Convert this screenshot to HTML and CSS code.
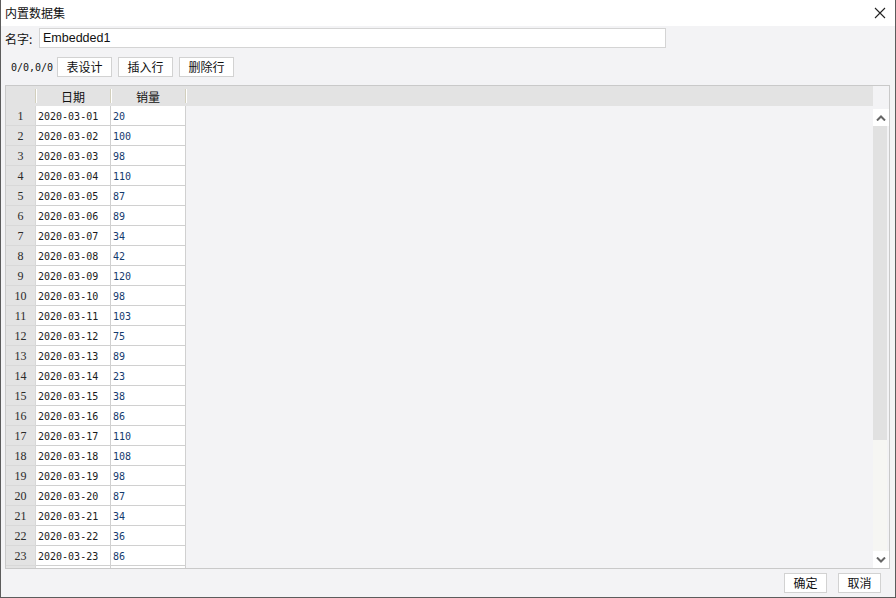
FILE: index.html
```html
<!DOCTYPE html>
<html lang="zh-CN">
<head>
    <meta charset="UTF-8">
    <title>内置数据集</title>
    <link rel="stylesheet" href="styles.css">
</head>
<body>
    <div class="window">
        <div class="titlebar">
            <span class="title">内置数据集</span>
            <svg class="close" width="12" height="12" viewBox="0 0 12 12">
                <path d="M1 1 L11 11 M11 1 L1 11" stroke="#222" stroke-width="1.1" fill="none"/>
            </svg>
        </div>

        <div class="name-row">
            <span class="label">名字:</span>
            <div class="name-input">Embedded1</div>
        </div>

        <div class="toolbar">
            <span class="pos">0/0,0/0</span>
            <button class="btn">表设计</button>
            <button class="btn">插入行</button>
            <button class="btn">删除行</button>
        </div>

        <div class="grid">
            <div class="sheet">
                <div class="head">
                    <div class="hcell num"></div>
                    <div class="hcell date">日期</div>
                    <div class="hcell val">销量</div>
                </div>
                <div id="rows"></div>
            </div>
            <div class="scrollbar">
                <div class="sb-top"></div>
                <div class="sb-btn">
                    <svg width="10" height="6" viewBox="0 0 10 6"><path d="M1 5.5 L5 1.5 L9 5.5" stroke="#666" stroke-width="2" fill="none"/></svg>
                </div>
                <div class="sb-thumb"></div>
                <div class="sb-track"></div>
                <div class="sb-btn">
                    <svg width="10" height="6" viewBox="0 0 10 6"><path d="M1 0.5 L5 4.5 L9 0.5" stroke="#666" stroke-width="2" fill="none"/></svg>
                </div>
            </div>
        </div>

        <div class="footer">
            <button class="btn">确定</button>
            <button class="btn">取消</button>
        </div>
    </div>

    <script>
        // 内置数据
        const data = [20, 100, 98, 110, 87, 89, 34, 42, 120, 98, 103, 75, 89, 23, 38, 86, 110, 108, 98, 87, 34, 36, 86];
        const rows = document.getElementById('rows');
        data.forEach((v, i) => {
            const day = String(i + 1).padStart(2, '0');
            const row = document.createElement('div');
            row.className = 'row';
            row.innerHTML =
                '<div class="cell num">' + (i + 1) + '</div>' +
                '<div class="cell date">2020-03-' + day + '</div>' +
                '<div class="cell val">' + v + '</div>';
            rows.appendChild(row);
        });
        // 下一行只露出边框
        const tail = document.createElement('div');
        tail.className = 'row';
        tail.innerHTML = '<div class="cell num"></div><div class="cell date"></div><div class="cell val"></div>';
        rows.appendChild(tail);
    </script>
</body>
</html>
```

FILE: styles.css
```css
* {
    box-sizing: border-box;
}
body {
    margin: 0;
    font-family: "Noto Sans CJK SC", "Liberation Sans", sans-serif;
    font-size: 12px;
    color: #111;
}
.window {
    width: 896px;
    height: 598px;
    background-color: #f3f3f5;
    border: 1px solid #5c5c5c;
    border-top: none;
    display: flex;
    flex-direction: column;
}
.titlebar {
    height: 26px;
    background-color: #ffffff;
    display: flex;
    align-items: center;
    justify-content: space-between;
    padding: 0 9px 1px 4px;
}
.title {
    line-height: 14px;
}
.name-row {
    display: flex;
    align-items: center;
    height: 20px;
    margin-top: 2px;
    padding-left: 4px;
}
.label {
    width: 34px;
}
.name-input {
    width: 627px;
    height: 20px;
    background-color: #ffffff;
    border: 1px solid #d4d4d4;
    padding-left: 3px;
    font-family: "Liberation Sans", sans-serif;
    font-size: 12.5px;
    line-height: 18px;
}
.toolbar {
    display: flex;
    align-items: center;
    height: 20px;
    margin-top: 9px;
    padding-left: 10px;
    gap: 6px;
}
.pos {
    font-family: "DejaVu Sans Mono", monospace;
    font-size: 10px;
    width: 40px;
}
.btn {
    height: 20px;
    padding: 0 8px;
    background-color: #ffffff;
    border: 1px solid #d2d2d2;
    font-family: "Noto Sans CJK SC", sans-serif;
    font-size: 12px;
    color: #111;
    line-height: 16px;
}
.toolbar .btn {
    width: 55px;
}
.grid {
    margin: 8px 5px 0 4px;
    height: 484px;
    border: 1px solid #c9c9c9;
    display: flex;
    overflow: hidden;
}
.sheet {
    flex: 1;
    overflow: hidden;
}
.head {
    display: flex;
    height: 20px;
    background-color: #e3e3e3;
}
.hcell {
    height: 14px;
    margin-top: 3px;
    border-right: 1px solid #d2cfbd;
    box-shadow: 1px 0 0 #ffffff;
    text-align: center;
    line-height: 15px;
}
.num {
    width: 30px;
}
.date {
    width: 75px;
}
.val {
    width: 75px;
}
.row {
    display: flex;
    height: 20px;
}
.cell {
    height: 20px;
    border-right: 1px solid #d0d0d0;
    border-bottom: 1px solid #d0d0d0;
    background-color: #ffffff;
    padding-top: 1px;
    line-height: 19px;
    padding-left: 2px;
    font-family: "DejaVu Sans Mono", monospace;
    font-size: 10px;
}
.cell.num {
    background-color: #e3e3e3;
    border-right: 1px solid #d8d8d8;
    border-bottom: 1px solid #d8d8d8;
    text-align: center;
    padding-left: 0;
    font-family: "Liberation Serif", serif;
    font-size: 12px;
    color: #2a2a2a;
}
.cell.date {
    color: #1a1a1a;
}
.cell.val {
    color: #143a6e;
}
.scrollbar {
    width: 16px;
    display: flex;
    flex-direction: column;
}
.sb-top {
    height: 23px;
}
.sb-btn {
    height: 17px;
    background-color: #ffffff;
    display: flex;
    align-items: center;
    justify-content: center;
}
.sb-thumb {
    height: 314px;
    background-color: #e1e1e1;
    margin-right: 2px;
}
.sb-track {
    flex: 1;
    background-color: #f6f6f3;
    margin-right: 2px;
}
.footer {
    display: flex;
    justify-content: flex-end;
    gap: 11px;
    margin-top: 4px;
    padding-right: 14px;
}
.footer .btn {
    width: 43px;
    padding: 0;
}
```
